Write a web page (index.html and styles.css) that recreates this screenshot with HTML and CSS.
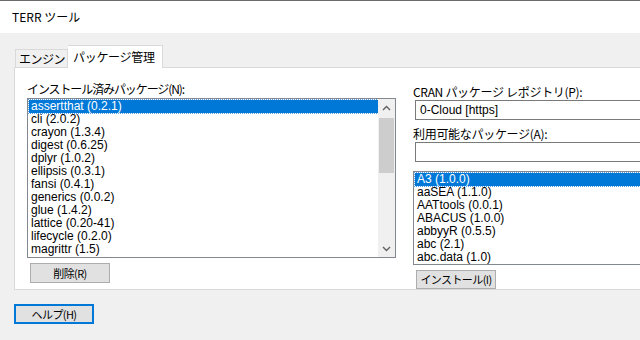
FILE: index.html
```html
<!DOCTYPE html>
<html>
	<head>
		<meta charset="utf-8">
		<link rel="stylesheet" href="styles.css">
	</head>
	<body>
		<div class="titlebar">TERR ツール</div>
		<div class="fereastra">
			<div class="taburi">
				<div class="tab">エンジン</div>
				<div class="tab activ">パッケージ管理</div>
			</div>
			<div class="panou">
				<div class="coloana stanga">
					<div class="eticheta">インストール済みパッケージ(N):</div>
					<div class="lista lista_mare">
						<div class="randuri">
							<div class="rand selectat">assertthat (0.2.1)</div>
							<div class="rand">cli (2.0.2)</div>
							<div class="rand">crayon (1.3.4)</div>
							<div class="rand">digest (0.6.25)</div>
							<div class="rand">dplyr (1.0.2)</div>
							<div class="rand">ellipsis (0.3.1)</div>
							<div class="rand">fansi (0.4.1)</div>
							<div class="rand">generics (0.0.2)</div>
							<div class="rand">glue (1.4.2)</div>
							<div class="rand">lattice (0.20-41)</div>
							<div class="rand">lifecycle (0.2.0)</div>
							<div class="rand">magrittr (1.5)</div>
						</div>
						<div class="scroll">
							<div class="sageata">
								<svg width="9" height="6" viewBox="0 0 9 6"><path d="M1 5 L4.5 1.5 L8 5" fill="none" stroke="#606060" stroke-width="1.4"/></svg>
							</div>
							<div class="pista"><div class="cursor"></div></div>
							<div class="sageata">
								<svg width="9" height="6" viewBox="0 0 9 6"><path d="M1 1 L4.5 4.5 L8 1" fill="none" stroke="#606060" stroke-width="1.4"/></svg>
							</div>
						</div>
					</div>
					<button class="buton">削除(R)</button>
				</div>
				<div class="coloana dreapta">
					<div class="eticheta">CRAN パッケージ レポジトリ(P):</div>
					<div class="camp">0-Cloud [https]</div>
					<div class="eticheta">利用可能なパッケージ(A):</div>
					<div class="camp"></div>
					<div class="lista lista_mica">
						<div class="randuri">
							<div class="rand selectat">A3 (1.0.0)</div>
							<div class="rand">aaSEA (1.1.0)</div>
							<div class="rand">AATtools (0.0.1)</div>
							<div class="rand">ABACUS (1.0.0)</div>
							<div class="rand">abbyyR (0.5.5)</div>
							<div class="rand">abc (2.1)</div>
							<div class="rand">abc.data (1.0)</div>
						</div>
					</div>
					<button class="buton">インストール(I)</button>
				</div>
			</div>
			<div class="jos">
				<button class="buton focus">ヘルプ(H)</button>
			</div>
		</div>
	</body>
</html>
```

FILE: styles.css
```css
body{
	margin: 0;
	width: 640px;
	height: 340px;
	overflow: hidden;
	background-color: #f0f0f0;
	font-family: "Liberation Sans", "Noto Sans CJK JP", sans-serif;
	font-size: 12px;
	color: #000;
}

.titlebar{
	height: 32px;
	border-top: 1px solid #6b6b6b;
	background-color: #fff;
	padding-left: 12px;
	line-height: 32px;
	font-size: 12px;
	font-family: "Noto Sans CJK JP", sans-serif;
}

.fereastra{
	padding: 12px 0 0 14px;
}

.taburi{
	display: flex;
	align-items: flex-end;
	height: 22px;
	padding-left: 1px;
	font-family: "Noto Sans CJK JP", sans-serif;
}

.tab{
	height: 17px;
	line-height: 17px;
	padding: 0 2px 0 3px;
	letter-spacing: -0.5px;
	border: 1px solid #d9d9d9;
	border-bottom: none;
	background-color: #f0f0f0;
}

.tab.activ{
	height: 22px;
	line-height: 21px;
	padding: 0 7px 0 5px;
	letter-spacing: -0.3px;
	background-color: #fff;
	border-left: none;
	margin-bottom: -1px;
}

.panou{
	display: flex;
	width: 626px;
	height: 223px;
	border: 1px solid #d9d9d9;
	border-right: none;
	background-color: #fff;
	padding: 13px 0 0 12px;
	box-sizing: border-box;
}

.coloana{
	display: flex;
	flex-direction: column;
}

.stanga{
	width: 369px;
}

.dreapta{
	margin-left: 17px;
	flex: 1;
	padding-top: 3px;
}

.eticheta{
	height: 16px;
	line-height: 16px;
	white-space: nowrap;
	font-family: "Noto Sans CJK JP", sans-serif;
}

.stanga .eticheta{
	height: 17px;
	letter-spacing: -1.1px;
}

.dreapta .eticheta{
	letter-spacing: -0.3px;
}

.lista{
	display: flex;
	border: 1px solid #828790;
	background-color: #fff;
	box-sizing: border-box;
}

.lista_mare{
	height: 160px;
}

.lista_mica{
	height: 95px;
	margin-top: 3px;
	border-right: none;
}

.randuri{
	flex: 1;
	padding: 1px 0 0 1px;
}

.rand{
	height: 13px;
	line-height: 13px;
	padding-left: 2px;
	white-space: nowrap;
}

.rand.selectat{
	background-color: #0078d7;
	color: #fff;
	outline: 1px dotted #5aa0e0;
}

.scroll{
	width: 17px;
	display: flex;
	flex-direction: column;
	background-color: #f0f0f0;
}

.sageata{
	height: 17px;
	display: flex;
	align-items: center;
	justify-content: center;
}

.pista{
	flex: 1;
}

.cursor{
	height: 55px;
	margin: 2px 1px 0 1px;
	background-color: #cdcdcd;
}

.camp{
	height: 20px;
	line-height: 18px;
	border: 1px solid #7a7a7a;
	border-right: none;
	box-sizing: border-box;
	padding-left: 4px;
	margin-left: 2px;
	margin-bottom: 6px;
}

.buton{
	width: 80px;
	height: 20px;
	margin-top: 5px;
	margin-left: 3px;
	padding: 0;
	white-space: nowrap;
	letter-spacing: -0.6px;
	background-color: #e1e1e1;
	border: 1px solid #adadad;
	font-family: "Noto Sans CJK JP", sans-serif;
	font-size: 11px;
	color: #000;
}

.jos{
	padding-top: 14px;
}

.buton.focus{
	margin: 0;
	border: 2px solid #0078d7;
	box-shadow: inset 0 0 0 1px #e1e1e1;
}
```
